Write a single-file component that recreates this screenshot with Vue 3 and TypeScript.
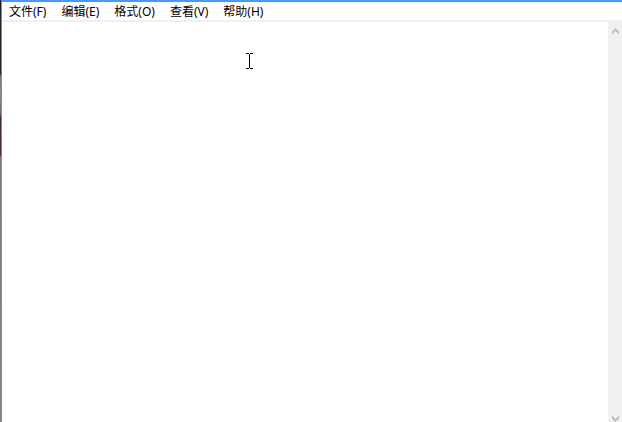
<script setup lang="ts">
import { ref } from 'vue'

interface MenuEntry {
  label: string
  key: string
}

const menus: MenuEntry[] = [
  { label: '文件', key: 'F' },
  { label: '编辑', key: 'E' },
  { label: '格式', key: 'O' },
  { label: '查看', key: 'V' },
  { label: '帮助', key: 'H' },
]

const content = ref('')
const editor = ref<HTMLTextAreaElement | null>(null)

function scrollLine(direction: number) {
  editor.value?.scrollBy({ top: direction * 20 })
}
</script>

<template>
  <div class="desktop">
    <main class="window">
      <nav class="menubar">
        <button v-for="menu in menus" :key="menu.key" class="menu" type="button">{{ menu.label }}({{ menu.key }})</button>
      </nav>
      <div class="body">
        <textarea ref="editor" v-model="content" class="editor" aria-label="文本" spellcheck="false"></textarea>
        <div class="scrollbar">
          <button class="arrow" type="button" aria-label="向上滚动" @click="scrollLine(-1)">
            <svg width="7" height="6" viewBox="0 0 7 6" shape-rendering="crispEdges">
              <path d="M3 0h1v1h1v1h1v1h1v3H6V5H5V4H4V3H3v1H2v1H1v1H0V3h1V2h1V1h1z" fill="#bfbfbf" />
            </svg>
          </button>
          <button class="arrow" type="button" aria-label="向下滚动" @click="scrollLine(1)">
            <svg width="7" height="6" viewBox="0 0 7 6" shape-rendering="crispEdges">
              <path d="M3 6h1V5h1V4h1V3h1V0H6v1H5v1H4v1H3V2H2V1H1V0H0v3h1v1h1v1h1z" fill="#bfbfbf" />
            </svg>
          </button>
        </div>
      </div>
    </main>
    <svg class="pointer" width="7" height="16" viewBox="0 0 7 16" shape-rendering="crispEdges" aria-hidden="true">
      <path d="M0 0h3v1h1V0h3v1H4v14h3v1H4v-1H3v1H0v-1h3V1H0z" fill="#000" />
    </svg>
  </div>
</template>

<style>
body {
  margin: 0;
}
</style>

<style scoped>
.desktop {
  position: relative;
  display: flex;
  box-sizing: border-box;
  height: 100vh;
  padding-left: 1px;
  background: linear-gradient(
    #20222e 0,
    #20222e 74px,
    #77777b 76px,
    #8c8c8e 96px,
    #66666a 115px,
    #3c2529 117px,
    #4a2c31 155px,
    #7d7b7e 157px,
    #858387 100%
  );
}

.window {
  display: flex;
  flex: 1;
  flex-direction: column;
  min-width: 0;
  border-top: 2px solid #429cf7;
  border-left: 1px solid #429cf7;
  background: #fff;
}

.menubar {
  display: flex;
  gap: 1px;
  padding-top: 1px;
  border-bottom: 2px solid #f0f0f0;
}

.menu {
  height: 17px;
  padding: 0 7px;
  border: 0;
  background: none;
  color: #000;
  font: 12px/17px "Noto Sans", "Noto Sans CJK SC", sans-serif;
  white-space: nowrap;
}

.menu:hover {
  background: #e5f3ff;
}

.body {
  display: flex;
  flex: 1;
  min-height: 0;
}

.editor {
  flex: 1;
  min-width: 0;
  padding: 2px 4px;
  border: 0;
  outline: 0;
  resize: none;
  overflow: auto;
  background: #fff;
  color: #000;
  font: 14px/20px "Noto Sans CJK SC", sans-serif;
}

.scrollbar {
  display: flex;
  flex-direction: column;
  justify-content: space-between;
  width: 14px;
  background: #f0f0f0;
}

.arrow {
  display: flex;
  justify-content: center;
  padding: 6px 0 0;
  border: 0;
  background: none;
}

.pointer {
  position: absolute;
  top: 53px;
  left: 246px;
  pointer-events: none;
}
</style>
